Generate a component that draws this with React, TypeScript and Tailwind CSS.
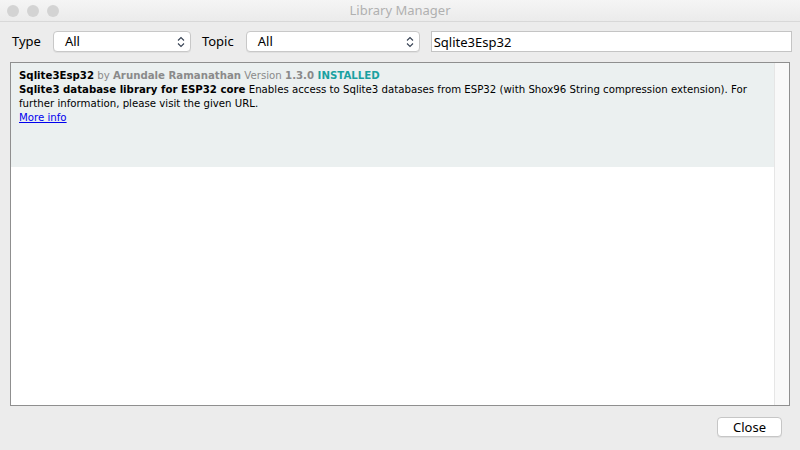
import { useState } from "react";

const UI_FONT = "font-['Noto_Sans','Liberation_Sans',sans-serif]";
const LIST_FONT = "font-['DejaVu_Sans','Liberation_Sans',sans-serif]";

function Arrows() {
  return (
    <svg width="8" height="12" viewBox="0 0 8 12" className="text-gray-700">
      <path d="M1 4.5 L4 1.5 L7 4.5" fill="none" stroke="currentColor" strokeWidth="1.1" />
      <path d="M1 7.5 L4 10.5 L7 7.5" fill="none" stroke="currentColor" strokeWidth="1.1" />
    </svg>
  );
}

function Select({ value, width }: { value: string; width: string }) {
  return (
    <div
      className={`flex h-[21px] ${width} items-center justify-between rounded-[4px] border border-[#c8c8c8] bg-white pr-[5px] pl-[11px] text-[13px] text-black shadow-[0_1px_0_rgba(0,0,0,0.05)]`}
    >
      <span>{value}</span>
      <Arrows />
    </div>
  );
}

export default function App() {
  const [query, setQuery] = useState("Sqlite3Esp32");

  return (
    <div className={`flex h-[450px] w-[800px] flex-col bg-[#ececec] ${UI_FONT}`}>
      {/* title bar */}
      <div className="relative flex h-[22px] items-center justify-center border-b border-[#d8d8d8] bg-gradient-to-b from-[#f5f5f5] to-[#ebebeb]">
        <div className="absolute top-[5px] left-[7px] flex gap-[8px]">
          <span className="h-[12px] w-[12px] rounded-full bg-[#d3d3d3]" />
          <span className="h-[12px] w-[12px] rounded-full bg-[#d3d3d3]" />
          <span className="h-[12px] w-[12px] rounded-full bg-[#d3d3d3]" />
        </div>
        <span className="text-[13px] text-[#b0b0b0]">Library Manager</span>
      </div>

      {/* filter row */}
      <div className="flex items-center pt-[9px] pl-[12px] text-[13px] text-black">
        <span className="mr-[12px]">Type</span>
        <Select value="All" width="w-[138px]" />
        <span className="mr-[12px] ml-[11px]">Topic</span>
        <Select value="All" width="w-[174px]" />
        <input
          value={query}
          onChange={(e) => setQuery(e.target.value)}
          className="ml-[11px] h-[21px] w-[361px] border border-[#c4c4c4] bg-white px-[2px] text-[13px] text-black outline-none"
        />
      </div>

      {/* library list */}
      <div className="mx-[10px] mt-[10px] flex h-[344px] border-[1.5px] border-[#8f8f8f] bg-white">
        <div className="flex-1">
          <div className={`h-[104px] bg-[#ebf0f0] px-[8px] pt-[6px] text-[10.2px] leading-[14px] text-black ${LIST_FONT}`}>
            <div>
              <span className="font-bold">Sqlite3Esp32</span>
              <span className="text-[#8a8a8a]"> by </span>
              <span className="font-bold text-[#8a8a8a]">Arundale Ramanathan</span>
              <span className="text-[#8a8a8a]"> Version </span>
              <span className="font-bold text-[#8a8a8a]">1.3.0</span>
              <span className="font-bold text-[#1aa1a1]"> INSTALLED</span>
            </div>
            <div>
              <span className="font-bold">Sqlite3 database library for ESP32 core</span> Enables
              access to Sqlite3 databases from ESP32 (with Shox96 String compression extension). For
              further information, please visit the given URL.
            </div>
            <a href="#" className="text-[#0000ee] underline">
              More info
            </a>
          </div>
        </div>
        <div className="w-[15px] border-l border-[#e6e6e6] bg-[#f9f9f9]" />
      </div>

      {/* footer */}
      <div className="flex justify-end pt-[11px] pr-[18px]">
        <button className="h-[20px] w-[65px] rounded-[4px] border border-[#c6c6c6] bg-white text-[13px] leading-none text-black shadow-[0_1px_0_rgba(0,0,0,0.06)]">
          Close
        </button>
      </div>
    </div>
  );
}
